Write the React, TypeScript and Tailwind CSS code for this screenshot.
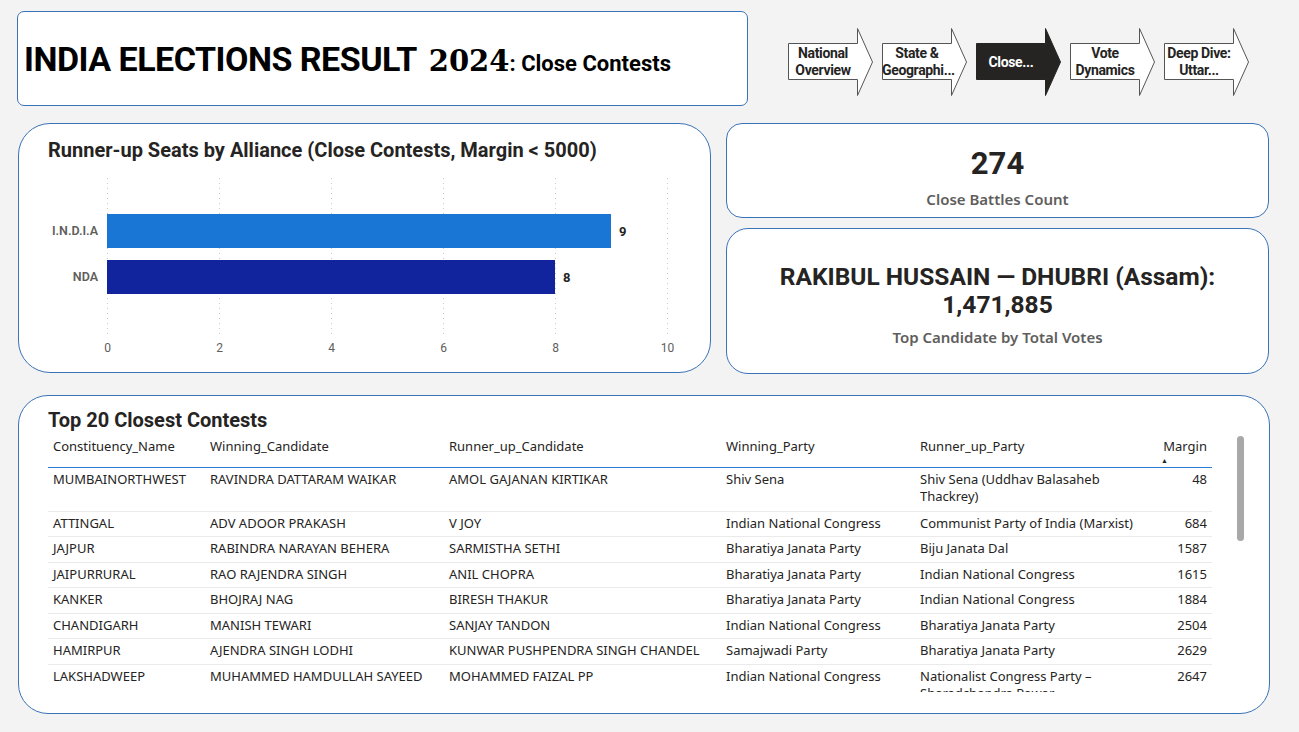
import React from "react";

const din = "font-['Roboto','DejaVu_Sans',sans-serif]";
const segoe = "font-['Noto_Sans','Open_Sans',sans-serif]";

const navItems = [
  { lines: ["National", "Overview"], active: false },
  { lines: ["State &", "Geographi..."], active: false },
  { lines: ["Close..."], active: true },
  { lines: ["Vote", "Dynamics"], active: false },
  { lines: ["Deep Dive:", "Uttar..."], active: false },
];

const rows = [
  ["MUMBAINORTHWEST", "RAVINDRA DATTARAM WAIKAR", "AMOL GAJANAN KIRTIKAR", "Shiv Sena", "Shiv Sena (Uddhav Balasaheb Thackrey)", "48"],
  ["ATTINGAL", "ADV ADOOR PRAKASH", "V JOY", "Indian National Congress", "Communist Party of India (Marxist)", "684"],
  ["JAJPUR", "RABINDRA NARAYAN BEHERA", "SARMISTHA SETHI", "Bharatiya Janata Party", "Biju Janata Dal", "1587"],
  ["JAIPURRURAL", "RAO RAJENDRA SINGH", "ANIL CHOPRA", "Bharatiya Janata Party", "Indian National Congress", "1615"],
  ["KANKER", "BHOJRAJ NAG", "BIRESH THAKUR", "Bharatiya Janata Party", "Indian National Congress", "1884"],
  ["CHANDIGARH", "MANISH TEWARI", "SANJAY TANDON", "Indian National Congress", "Bharatiya Janata Party", "2504"],
  ["HAMIRPUR", "AJENDRA SINGH LODHI", "KUNWAR PUSHPENDRA SINGH CHANDEL", "Samajwadi Party", "Bharatiya Janata Party", "2629"],
  ["LAKSHADWEEP", "MUHAMMED HAMDULLAH SAYEED", "MOHAMMED FAIZAL PP", "Indian National Congress", "Nationalist Congress Party – Sharadchandra Pawar", "2647"],
];

const NavArrow = ({ lines, active }: { lines: string[]; active: boolean }) => (
  <div className="relative w-[86px] h-[68px] flex items-center">
    <svg className="absolute inset-0" width="86" height="68" viewBox="0 0 86 68">
      <polygon
        points="0.5,15.5 69.5,15.5 69.5,0.5 84.5,34 69.5,67.5 69.5,51.5 0.5,51.5"
        fill={active ? "#252423" : "#ffffff"}
        stroke={active ? "#252423" : "#555555"}
        strokeWidth="1"
      />
    </svg>
    <div
      className={`relative w-[70px] text-center leading-[17px] text-[14px] font-bold tracking-tight ${din} ${
        active ? "text-white" : "text-[#252423]"
      }`}
    >
      {lines.map((l) => (
        <div key={l}>{l}</div>
      ))}
    </div>
  </div>
);

const Chart = () => {
  const x0 = 88;
  const unit = 56;
  const ticks = [0, 2, 4, 6, 8, 10];
  return (
    <svg width="693" height="200" viewBox="0 0 693 200" className="block">
      {ticks.map((t) => (
        <line
          key={t}
          x1={x0 + t * unit + 0.5}
          x2={x0 + t * unit + 0.5}
          y1="9"
          y2="165"
          stroke="#c8c6c4"
          strokeWidth="1"
          strokeDasharray="1 4"
        />
      ))}
      <rect x={x0} y="45" width={9 * unit} height="34" fill="#1a76d4" />
      <rect x={x0} y="91" width={8 * unit} height="34" fill="#12239e" />
      <text x="79" y="66" textAnchor="end" fontSize="12.5" fontWeight="600" fill="#605e5c" fontFamily="Roboto, sans-serif">
        I.N.D.I.A
      </text>
      <text x="79" y="112" textAnchor="end" fontSize="12.5" fontWeight="600" fill="#605e5c" fontFamily="Roboto, sans-serif">
        NDA
      </text>
      <text x={x0 + 9 * unit + 8} y="67" fontSize="13" fontWeight="700" fill="#252423" fontFamily="Roboto, sans-serif">
        9
      </text>
      <text x={x0 + 8 * unit + 8} y="113" fontSize="13" fontWeight="700" fill="#252423" fontFamily="Roboto, sans-serif">
        8
      </text>
      {ticks.map((t) => (
        <text
          key={t}
          x={x0 + t * unit + 0.5}
          y="183"
          textAnchor="middle"
          fontSize="12"
          fill="#605e5c"
          fontFamily="Roboto, sans-serif"
        >
          {t}
        </text>
      ))}
    </svg>
  );
};

const App = () => {
  return (
    <div className="w-[1299px] h-[732px] bg-[#f2f3f2] overflow-hidden pl-[17px] pt-[11px]">
      {/* header */}
      <div className="flex items-start">
        <div className="w-[731px] h-[95px] bg-white border border-[#3b73b9] rounded-[7px] flex items-center pl-[6px]">
          <h1 className={`${din} text-[#000] font-bold whitespace-nowrap flex items-baseline mt-[1px]`}>
            <span className="text-[34px] tracking-[-0.5px]">INDIA ELECTIONS RESULT</span>
            <span className="text-[29px] font-['DejaVu_Serif',serif] ml-[12px]">2024</span>
            <span className="text-[22px]">: Close Contests</span>
          </h1>
        </div>
        <div className="flex gap-[8px] ml-[40px] mt-[17px]">
          {navItems.map((n) => (
            <NavArrow key={n.lines.join()} lines={n.lines} active={n.active} />
          ))}
        </div>
      </div>

      {/* middle */}
      <div className="flex mt-[17px] ml-[1px]">
        <div className="w-[693px] h-[250px] bg-white border border-[#3b73b9] rounded-[32px]">
          <h2 className={`${din} font-bold text-[20px] text-[#252423] ml-[29px] mt-[12px] leading-[28px]`}>
            Runner-up Seats by Alliance (Close Contests, Margin &lt; 5000)
          </h2>
          <div className="mt-[5px]">
            <Chart />
          </div>
        </div>
        <div className="flex flex-col gap-[10px] ml-[15px]">
          <div className="w-[543px] h-[95px] bg-white border border-[#3b73b9] rounded-[16px] flex flex-col items-center pt-[20px]">
            <div className={`${din} font-bold text-[31px] leading-[40px] text-[#252423]`}>274</div>
            <div className={`${segoe} font-semibold text-[15px] leading-[20px] text-[#605e5c] mt-[5px]`}>
              Close Battles Count
            </div>
          </div>
          <div className="w-[543px] h-[146px] bg-white border border-[#3b73b9] rounded-[22px] flex flex-col items-center pt-[34px]">
            <div className={`${din} font-bold text-[24.5px] leading-[28px] text-[#252423] text-center`}>
              RAKIBUL HUSSAIN — DHUBRI (Assam):
              <br />
              1,471,885
            </div>
            <div className={`${segoe} font-semibold text-[15px] leading-[20px] text-[#605e5c] mt-[8px]`}>
              Top Candidate by Total Votes
            </div>
          </div>
        </div>
      </div>

      {/* table */}
      <div className="w-[1252px] h-[319px] mt-[21px] ml-[1px] bg-white border border-[#3b73b9] rounded-[30px] relative pl-[29px] pt-[10px]">
        <h2 className={`${din} font-bold text-[20px] leading-[28px] text-[#252423]`}>Top 20 Closest Contests</h2>
        <div className="w-[1164px] h-[257px] overflow-hidden mt-[1px]">
          <table className={`${segoe} text-[13px] text-[#252423] border-collapse table-fixed w-[1164px]`}>
            <colgroup>
              <col className="w-[157px]" />
              <col className="w-[239px]" />
              <col className="w-[277px]" />
              <col className="w-[194px]" />
              <col className="w-[235px]" />
              <col className="w-[62px]" />
            </colgroup>
            <thead>
              <tr className="border-b-[1.5px] border-[#2b7bd6] h-[32px] align-top">
                {["Constituency_Name", "Winning_Candidate", "Runner_up_Candidate", "Winning_Party", "Runner_up_Party"].map((h) => (
                  <th key={h} className="text-left font-normal px-[5px] pt-[2px]">
                    {h}
                  </th>
                ))}
                <th className="text-right font-normal px-[5px] pt-[2px] relative">
                  Margin
                  <span className="absolute left-[11px] top-[22px] text-[7px] leading-none">▲</span>
                </th>
              </tr>
            </thead>
            <tbody>
              {rows.map((r) => (
                <tr key={r[0]} className="border-b border-[#eaeaea] align-top">
                  {r.map((c, i) => (
                    <td
                      key={i}
                      className={`px-[5px] pt-[3px] pb-[3px] leading-[17px] ${i === 5 ? "text-right" : "text-left"} ${
                        r[0] === "MUMBAINORTHWEST" ? "h-[44px]" : "h-[25.5px]"
                      }`}
                    >
                      {c}
                    </td>
                  ))}
                </tr>
              ))}
            </tbody>
          </table>
        </div>
        <div className="absolute left-[1218px] top-[40px] w-[7px] h-[105px] rounded-full bg-[#a8a8a8]" />
      </div>
    </div>
  );
};

export default App;
